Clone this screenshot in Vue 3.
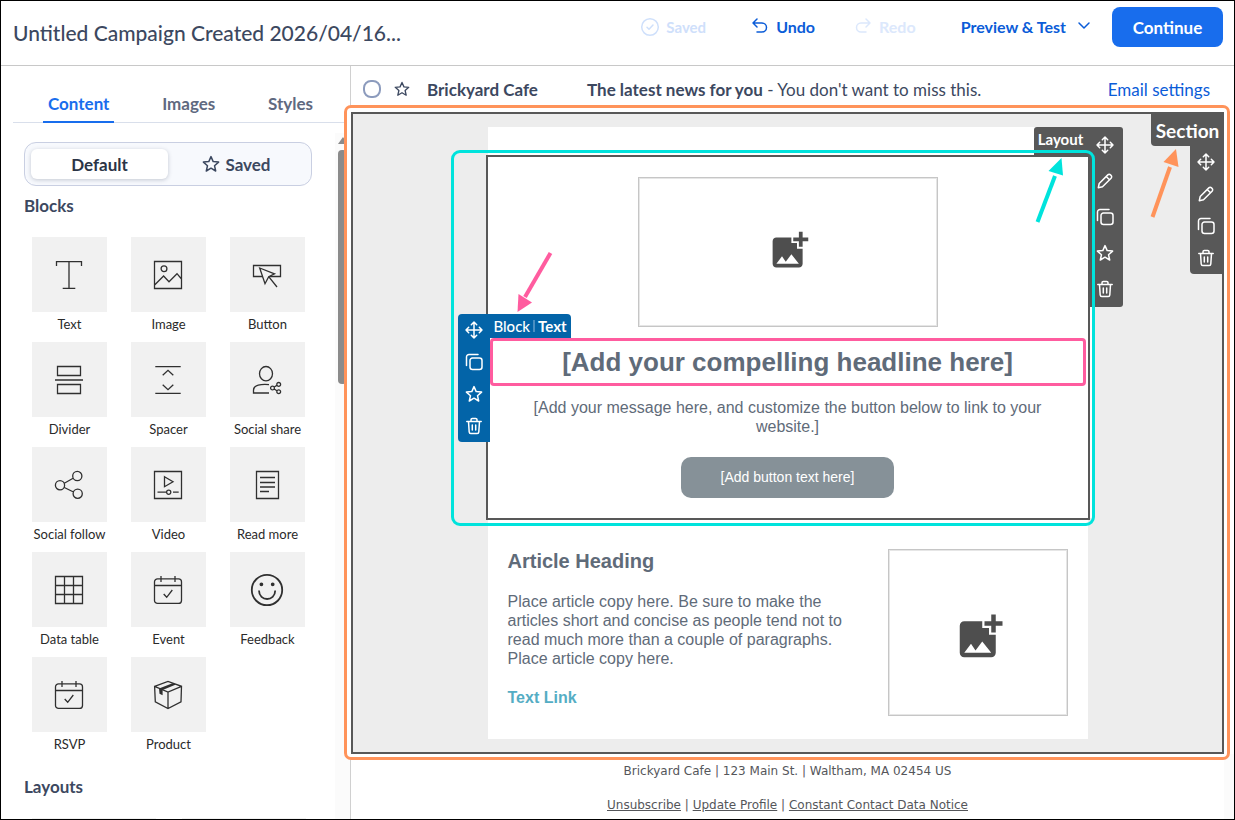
<script setup>
import {ref} from "vue";

const campaignTitle = 'Untitled Campaign Created 2026/04/16...';

const tabs = ['Content', 'Images', 'Styles'];
const activeTab = ref('Content');
const activeSource = ref('Default');
const selected = ref(false);

const circle = (x, y, r) => `M${x - r} ${y}a${r} ${r} 0 1 0 ${r * 2} 0a${r} ${r} 0 1 0 ${-r * 2} 0z`;

const starIcon = 'M9 1.6l2.2 5 5.4.5-4.1 3.6 1.2 5.3L9 13.2l-4.7 2.8 1.2-5.3L1.4 7.1l5.4-.5z';
const toolIcons = {
  move: 'M9 1v16M1 9h16M6.3 3.7 9 1l2.7 2.7M6.3 14.3 9 17l2.7-2.7M3.7 6.3 1 9l2.7 2.7M14.3 6.3 17 9l-2.7 2.7',
  edit: 'M2.3 15.7l.9-4.2 8.6-8.6a1.9 1.9 0 0 1 2.7 0l.6.6a1.9 1.9 0 0 1 0 2.7l-8.6 8.6zM10.2 4.5l3.3 3.3',
  copy: 'M7 5h7.5A2.5 2.5 0 0 1 17 7.5V14a2.5 2.5 0 0 1-2.5 2.5h-7A2.5 2.5 0 0 1 5 14V7.5A2.5 2.5 0 0 1 7.5 5M1.5 12.5V4A2.5 2.5 0 0 1 4 1.5h9',
  star: starIcon,
  trash: 'M1.8 4.5h14.4M6 4.5V2.8a1.3 1.3 0 0 1 1.3-1.3h3.4A1.3 1.3 0 0 1 12 2.8v1.7M3.5 4.5l.7 10.5a1.6 1.6 0 0 0 1.6 1.5h6.4a1.6 1.6 0 0 0 1.6-1.5l.7-10.5M7.3 8v5M10.7 8v5'
};
const sectionTools = ['move', 'edit', 'copy', 'trash'];
const layoutTools = ['move', 'edit', 'copy', 'star', 'trash'];
const blockTools = ['move', 'copy', 'star', 'trash'];

const calendar = 'M3.5 2.8h21a3 3 0 0 1 3 3v18.6a3 3 0 0 1-3 3h-21a3 3 0 0 1-3-3V5.8a3 3 0 0 1 3-3zM.5 9.5h27M7 0v6M21 0v6M9.7 18l3 3.3 5.6-7.3';
const blocks = [
  {
    name: 'Text',
    line: 'M1.5 5V.7h25V5M14 .7v26.6M7.7 27.3h12.6'
  },
  {
    name: 'Image',
    line: 'M.5.5h27v27H.5zM.6 24l9-9 5.4 5.7 8-8 4.5 5.3' + circle(10, 7.7, 2.9)
  },
  {
    name: 'Button',
    line: 'M.5 4.5h27v11H.5z',
    cover: 'M6.7 7l14.8 5.8-5.8 2.9-3.7 7zM15.7 15.7L24 26'
  },
  {
    name: 'Divider',
    line: 'M2.5.5h23v9h-23zM2.5 18.5h23v9h-23zM0 14h28'
  },
  {
    name: 'Spacer',
    line: 'M1.3.6h25.4M1.3 27.4h25.4M8.7 9.3l5.3-5 5.3 5M8.7 18.7l5.3 5 5.3-5'
  },
  {
    name: 'Social share',
    line: 'M6.5 7.7a6.5 7.2 0 1 0 13 0a6.5 7.2 0 1 0-13 0zM16 18.6C8 17.9.5 19 .5 24.2V27H16M21.2 21l2.7-1.6M21.2 23l2.7 1.8' + circle(19.5, 22, 1.9) + circle(25.7, 18.4, 1.9) + circle(25.7, 25.7, 1.9)
  },
  {
    name: 'Social follow',
    line: 'M9.3 12.2l8.8-4.9M9.3 16.5l9.2 4.5' + circle(5, 14.3, 4.6) + circle(22.3, 5, 4.6) + circle(22.7, 22.7, 4.6)
  },
  {
    name: 'Video',
    line: 'M.5.5h27v27H.5zM10.5 5.7l8.5 5-8.5 5zM3.5 21.2h9M19 21.2h5.7' + circle(14.7, 21.2, 2.1)
  },
  {
    name: 'Read more',
    line: 'M3.5.5h22v27h-22zM7 6.5h15M7 11.5h15M7 16h15M7 20.5h9'
  },
  {
    name: 'Data table',
    line: 'M.5.5h27v27H.5zM9.5.5v27M18.5.5v27M.5 9.5h27M.5 18.5h27'
  },
  {
    name: 'Event',
    line: calendar
  },
  {
    name: 'Feedback',
    bold: circle(14, 14, 15.2) + 'M6 14.5c0 11.3 16.2 11.3 16.2 0',
    solid: circle(8.4, 8.3, 1.9) + circle(19.7, 8.3, 1.9)
  },
  {
    name: 'RSVP',
    line: calendar
  },
  {
    name: 'Product',
    line: 'M.6 5.3L14 .5l13.5 4.8L27 20.8l-13 6.7-12.7-6.7zM.6 5.3L14 11l13.5-5.7M14 11v16.5',
    solid: 'M5 7.4L18.5 2.2l3.5 1.3L8.6 9v5.2l-3.1-1.5z'
  }
];

const addImage = 'M19 7v2.99s-1.99.01-2 0V7h-3s.01-1.99 0-2h3V2h2v3h3v2h-3zm-3 4V8h-3V5H5c-1.1 0-2 .9-2 2v12c0 1.1.9 2 2 2h12c1.1 0 2-.9 2-2v-8h-3zM5 19l3-4 2 3 3-4 4 5H5z';
</script>

<template>
  <div class="editor">
    <header class="header">
      <h1 class="title">{{campaignTitle}}</h1>
      <div class="actions">
        <span class="status">
          <svg width="18" height="18" viewBox="0 0 18 18"><circle cx="9" cy="9" r="8.3"/><path d="M6 9.2l2 2 4-4.2"/></svg>
          Saved
        </span>
        <button class="action">
          <svg width="16" height="16" viewBox="0 0 16 16"><path d="M5 1L1 5l4 4M1 5h9a4.500 4.500 0 0 1 0 9H5"/></svg>
          Undo
        </button>
        <button class="action redo" disabled>
          <svg width="16" height="16" viewBox="0 0 16 16"><path d="M11 1l4 4-4 4M15 5H6a4.500 4.500 0 0 0 0 9h5"/></svg>
          Redo
        </button>
        <button class="action preview">
          Preview &amp; Test
          <svg width="12" height="12" viewBox="0 0 12 12"><path d="M1 3l5 5 5-5"/></svg>
        </button>
        <button class="continue">Continue</button>
      </div>
    </header>

    <div class="main">
      <aside class="sidebar">
        <nav class="tabs">
          <button v-for="tab in tabs" :key="tab" class="tab" :class="{active: tab === activeTab}" @click="activeTab = tab">{{tab}}</button>
        </nav>
        <div class="scroller">
          <div class="panel">
            <div class="switch">
              <button class="switchBtn" :class="{active: activeSource === 'Default'}" @click="activeSource = 'Default'">Default</button>
              <button class="switchBtn" :class="{active: activeSource === 'Saved'}" @click="activeSource = 'Saved'">
                <svg width="18" height="18" viewBox="0 0 18 18"><path :d="starIcon"/></svg>
                Saved
              </button>
            </div>
            <h2 class="groupTitle">Blocks</h2>
            <div class="blocks">
              <button v-for="block in blocks" :key="block.name" class="block">
                <span class="tile">
                  <svg width="28" height="28" viewBox="0 0 28 28">
                    <path v-if="block.line" :d="block.line"/>
                    <path v-if="block.cover" class="cover" :d="block.cover"/>
                    <path v-if="block.bold" class="bold" :d="block.bold"/>
                    <path v-if="block.solid" class="solid" :d="block.solid"/>
                  </svg>
                </span>
                {{block.name}}
              </button>
            </div>
            <h2 class="groupTitle layoutsTitle">Layouts</h2>
            <div class="layouts">
              <span class="layoutTile"></span>
              <span class="layoutTile"></span>
            </div>
          </div>
          <div class="track">
            <span class="trackArrow"></span>
            <span class="thumb"></span>
          </div>
        </div>
      </aside>

      <main class="content">
        <div class="emailBar">
          <input v-model="selected" class="pick" type="checkbox" aria-label="Select email">
          <svg class="barStar" width="16" height="16" viewBox="0 0 18 18"><path :d="starIcon"/></svg>
          <strong class="sender">Brickyard Cafe</strong>
          <span class="subject"><strong>The latest news for you</strong> - You don't want to miss this.</span>
          <a class="settings" href="#">Email settings</a>
        </div>

        <section class="section">
          <div class="sectionFrame"></div>
          <div class="sectionMenu">
            <span class="sectionLabel">Section</span>
            <div class="sectionTools">
              <button v-for="tool in sectionTools" :key="tool" class="tool" :aria-label="tool">
                <svg width="18" height="18" viewBox="0 0 18 18"><path :d="toolIcons[tool]"/></svg>
              </button>
            </div>
            <svg class="arrow sectionArrow" width="30" height="70" viewBox="0 0 30 70">
              <path class="shaft" d="M2.5 69L20 19"/><path class="head" d="M26 1l2.5 18-15-5z"/>
            </svg>
          </div>

          <div class="canvas">
            <div class="layout">
              <div class="layoutMenu">
                <span class="layoutLabel">Layout</span>
                <div class="layoutTools">
                  <button v-for="tool in layoutTools" :key="tool" class="tool tall" :aria-label="tool">
                    <svg width="18" height="18" viewBox="0 0 18 18"><path :d="toolIcons[tool]"/></svg>
                  </button>
                </div>
              </div>
              <div class="layoutFrame"></div>
              <svg class="arrow layoutArrow" width="30" height="66" viewBox="0 0 30 66">
                <path class="shaft" d="M2.5 65L20 19"/><path class="head" d="M26.500 1L28 18.500 13.500 14z"/>
              </svg>

              <div class="picture">
                <svg width="45" height="45" viewBox="0 0 24 24"><path :d="addImage"/></svg>
              </div>
              <div class="textBlock">
                <div class="blockTools">
                  <button v-for="tool in blockTools" :key="tool" class="tool" :aria-label="tool">
                    <svg width="18" height="18" viewBox="0 0 18 18"><path :d="toolIcons[tool]"/></svg>
                  </button>
                </div>
                <div class="blockLabel">Block<i></i><b>Text</b></div>
                <svg class="arrow blockArrow" width="38" height="62" viewBox="0 0 38 62">
                  <path class="shaft" d="M35.5 2L10 46"/><path class="head" d="M2.5 61l1-18L17 51.500z"/>
                </svg>
                <h2 class="headline">[Add your compelling headline here]</h2>
              </div>
              <p class="message">[Add your message here, and customize the button below to link to your website.]</p>
              <button class="cta">[Add button text here]</button>
            </div>

            <article class="article">
              <div class="articleText">
                <h3>Article Heading</h3>
                <p>Place article copy here. Be sure to make the articles short and concise as people tend not to read much more than a couple of paragraphs. Place article copy here.</p>
                <a href="#">Text Link</a>
              </div>
              <div class="picture articlePicture">
                <svg width="54" height="54" viewBox="0 0 24 24"><path :d="addImage"/></svg>
              </div>
            </article>
          </div>
        </section>

        <footer class="footer">
          <p>Brickyard Cafe | 123 Main St. | Waltham, MA 02454 US</p>
          <p><a href="#">Unsubscribe</a> | <a href="#">Update Profile</a> | <a href="#">Constant Contact Data Notice</a></p>
        </footer>
      </main>
    </div>
  </div>
</template>

<style>
body{
  margin: 0;
}
</style>

<style scoped>
*{
  box-sizing: border-box;
}
h1, h2, h3, p{
  margin: 0;
}
button{
  padding: 0;
  border: none;
  background: none;
  font: inherit;
  color: inherit;
  cursor: pointer;
}
svg{
  display: block;
  flex: none;
  fill: none;
  stroke: currentColor;
  stroke-width: 1.5;
  stroke-linejoin: round;
  stroke-linecap: round;
  overflow: visible;
}
.editor{
  display: flex;
  flex-direction: column;
  height: 100vh;
  border: 1px solid #000;
  background-color: #fff;
  color: #3c4860;
  font-family: Lato, "Open Sans", sans-serif;
  font-size: 17px;
  overflow: hidden;
}
.header{
  display: flex;
  justify-content: space-between;
  flex: none;
  height: 65px;
  padding: 6px 11px 0 12px;
  border-bottom: 1px solid #c8c8c8;
}
.title{
  font-weight: 500;
  font-size: 21px;
  line-height: 52px;
  white-space: nowrap;
}
.actions{
  display: flex;
  align-items: center;
  height: 40px;
  font-weight: 700;
  font-size: 16px;
  color: #0b5cd8;
  white-space: nowrap;
}
.status{
  display: flex;
  align-items: center;
  gap: 7px;
  margin-right: 46px;
  font-size: 15px;
  color: #cfe0fb;
}
.action{
  display: flex;
  align-items: center;
  gap: 8px;
  margin-right: 40px;
  padding-bottom: 2px;
}
.action:disabled{
  color: #dce8fc;
  cursor: default;
}
.redo{
  margin-right: 45px;
}
.preview{
  gap: 12px;
  margin-right: 22px;
}
.continue{
  width: 111px;
  height: 40px;
  border-radius: 8px;
  background-color: #186ded;
  color: #fff;
  font-size: 17px;
}
.main{
  display: flex;
  flex: 1;
  min-height: 0;
}
.sidebar{
  display: flex;
  flex-direction: column;
  flex: none;
  width: 350px;
  border-right: 1px solid #d0d0d0;
}
.tabs{
  display: flex;
  justify-content: space-between;
  margin-left: 12px;
  padding: 20px 32px 0 30px;
  border-bottom: 1px solid #d9dfeb;
}
.tab{
  height: 37px;
  margin-bottom: -1px;
  padding: 0 5px;
  border-bottom: 2px solid transparent;
  font-weight: 700;
  color: #5f6980;
}
.tab.active{
  border-color: #186ded;
  color: #186ded;
}
.scroller{
  display: flex;
  flex: 1;
  min-height: 0;
  margin-top: 10px;
  overflow: hidden;
}
.panel{
  flex: 1;
  padding: 9px 23px 0 23px;
}
.switch{
  display: flex;
  height: 44px;
  padding: 6px;
  border: 1px solid #c9cfe2;
  border-radius: 12px;
  background-color: #f7f9fd;
}
.switchBtn{
  display: flex;
  flex: 1;
  align-items: center;
  justify-content: center;
  gap: 5px;
  border-radius: 6px;
  font-weight: 700;
}
.switchBtn.active{
  background-color: #fff;
  box-shadow: 0 1px 4px rgba(40, 50, 80, .25);
  color: #2b3446;
}
.groupTitle{
  margin-top: 9px;
  font-weight: 700;
  font-size: 17px;
  line-height: 22px;
}
.blocks{
  display: grid;
  grid-template-columns: repeat(3, 75px);
  gap: 6px 24px;
  margin: 20px 0 0 8px;
}
.block{
  display: flex;
  flex-direction: column;
  align-items: center;
  height: 99px;
  font-size: 13px;
  line-height: 24px;
  color: #2a2a2a;
  white-space: nowrap;
}
.tile{
  display: flex;
  width: 75px;
  height: 75px;
  padding: 24px 23px;
  background-color: #f1f1f1;
  color: #303030;
}
.tile svg{
  stroke-width: 1.3;
  stroke-linejoin: miter;
  stroke-linecap: butt;
}
.tile .cover{
  fill: #f1f1f1;
}
.tile .bold{
  stroke-width: 1.8;
}
.tile .solid{
  fill: currentColor;
  stroke: none;
}
.layoutsTitle{
  margin-top: 20px;
}
.layouts{
  display: flex;
  gap: 26px;
  margin: 20px 0 0 8px;
}
.layoutTile{
  width: 124px;
  height: 75px;
  background-color: #f1f1f1;
}
.track{
  width: 15px;
  padding: 4px 3px 0;
  background-color: #fbfbfb;
}
.trackArrow{
  display: block;
  height: 7px;
  border: 5px solid transparent;
  border-top: none;
  border-bottom: 7px solid #8b8b8b;
}
.thumb{
  display: block;
  height: 234px;
  margin-top: 6px;
  border-radius: 4px;
  background-color: #8b8b8b;
}
.content{
  flex: 1;
  min-width: 0;
}
.emailBar{
  display: flex;
  align-items: center;
  height: 46px;
  padding: 0 24px 0 12px;
  font-size: 17px;
  white-space: nowrap;
}
.pick{
  appearance: none;
  width: 18px;
  height: 18px;
  margin: 0;
  border: 2px solid #8c9bbd;
  border-radius: 8px;
}
.pick:checked{
  background-color: #186ded;
}
.barStar{
  margin-left: 13px;
}
.sender{
  width: 160px;
  margin-left: 17px;
}
.settings{
  margin-left: auto;
  color: #0b5cd8;
  text-decoration: none;
}
.section{
  position: relative;
  margin-right: 10px;
  padding: 13px;
  border: 2px solid #585858;
  background-color: #ededed;
  box-shadow: 0 0 0 4px #fff;
}
.sectionFrame{
  position: absolute;
  inset: -9px -8px -8px -9px;
  border: 3px solid #ff935a;
  border-radius: 7px;
  pointer-events: none;
}
.sectionMenu{
  position: absolute;
  top: -2px;
  right: -2px;
  display: flex;
  flex-direction: column;
  align-items: flex-end;
  color: #fff;
}
.sectionLabel{
  width: 73px;
  height: 34px;
  padding-top: 2px;
  border-bottom-left-radius: 4px;
  background-color: #585858;
  font-weight: 700;
  font-size: 19px;
  line-height: 34px;
  text-align: center;
}
.sectionTools{
  padding-right: 2px;
  border-bottom-left-radius: 4px;
  background-color: #585858;
}
.tool{
  display: flex;
  align-items: center;
  justify-content: center;
  width: 32px;
  height: 32px;
}
.tall{
  width: 35px;
  height: 36px;
}
.arrow{
  position: absolute;
}
.shaft{
  stroke-width: 4;
  stroke-linecap: butt;
}
.head{
  fill: currentColor;
  stroke: none;
}
.sectionArrow{
  top: 36px;
  right: 44px;
  color: #ff935a;
}
.canvas{
  max-width: 600px;
  margin: 0 auto;
  padding-top: 30px;
  background-color: #fff;
  color: #5f6b79;
  font-family: "Liberation Sans", Arial, sans-serif;
}
.layout{
  position: relative;
  display: flex;
  flex-direction: column;
  align-items: center;
  padding: 20px 0;
  outline: 2px solid #585858;
  box-shadow: 4px 0 0 #fff;
}
.layoutMenu{
  position: absolute;
  top: -30px;
  right: -35px;
  display: flex;
  align-items: flex-start;
  color: #fff;
  font-family: Lato, "Open Sans", sans-serif;
}
.layoutLabel{
  width: 54px;
  height: 30px;
  border-top-left-radius: 3px;
  background-color: #585858;
  font-weight: 700;
  font-size: 15px;
  line-height: 24px;
  text-align: center;
}
.layoutTools{
  border-radius: 0 3px 3px 0;
  background-color: #585858;
}
.layoutFrame{
  position: absolute;
  inset: -7px -7px -8px -37px;
  border: 3px solid #00e3dc;
  border-radius: 9px;
  pointer-events: none;
}
.layoutArrow{
  top: 0;
  right: 23px;
  color: #00e3dc;
}
.picture{
  display: flex;
  align-items: center;
  justify-content: center;
  width: 300px;
  height: 150px;
  padding: 0 0 4px 4px;
  border: 1px solid #c6c6c6;
  box-shadow: inset 0 0 0 1px #e6e6e6;
}
.picture svg{
  fill: #4e4e4e;
  stroke: none;
}
.textBlock{
  position: relative;
  align-self: stretch;
  margin: 11px 2px 0;
  border: 3px solid #ff5c9f;
  border-radius: 4px;
}
.headline{
  font-weight: 700;
  font-size: 26px;
  line-height: 42px;
  text-align: center;
}
.blockTools{
  position: absolute;
  top: -27px;
  left: -35px;
  border-radius: 4px 0 0 4px;
  background-color: #0364a8;
  color: #fff;
}
.blockLabel{
  position: absolute;
  top: -27px;
  left: -3px;
  display: flex;
  align-items: center;
  justify-content: center;
  gap: 3px;
  width: 81px;
  height: 24px;
  padding-bottom: 1px;
  border-top-right-radius: 4px;
  background-color: #0364a8;
  color: #fff;
  font-family: Lato, "Open Sans", sans-serif;
  font-size: 15px;
  font-weight: 500;
}
.blockLabel i{
  width: 2px;
  height: 12px;
  background-color: #4a8fc2;
}
.blockArrow{
  top: -90px;
  left: 22px;
  color: #ff5c9f;
}
.message{
  max-width: 560px;
  margin-top: 12px;
  padding: 0 20px;
  font-size: 16px;
  line-height: 19px;
  text-align: center;
}
.cta{
  width: 213px;
  height: 41px;
  margin-top: 21px;
  padding-bottom: 2px;
  border-radius: 10px;
  background-color: #869198;
  color: #fff;
  font-size: 14px;
}
.article{
  display: flex;
  justify-content: space-between;
  padding: 31px 20px 23px;
}
.articleText{
  width: 340px;
  font-size: 16px;
  line-height: 19px;
}
.articleText h3{
  font-size: 20px;
  line-height: 24px;
}
.articleText p{
  margin: 19px 0 20px;
}
.articleText a{
  font-weight: 700;
  color: #54adc4;
  text-decoration: none;
}
.articlePicture{
  width: 180px;
  height: 167px;
  padding: 8px 0 0 4px;
}
.footer{
  height: 66px;
  padding-top: 9px;
  border-right: 10px solid #fbfbfb;
  color: #55565a;
  font-family: "DejaVu Sans", Verdana, sans-serif;
  font-size: 12px;
  line-height: 17px;
  text-align: center;
}
.footer p + p{
  margin-top: 17px;
}
.footer a{
  color: inherit;
}
</style>
